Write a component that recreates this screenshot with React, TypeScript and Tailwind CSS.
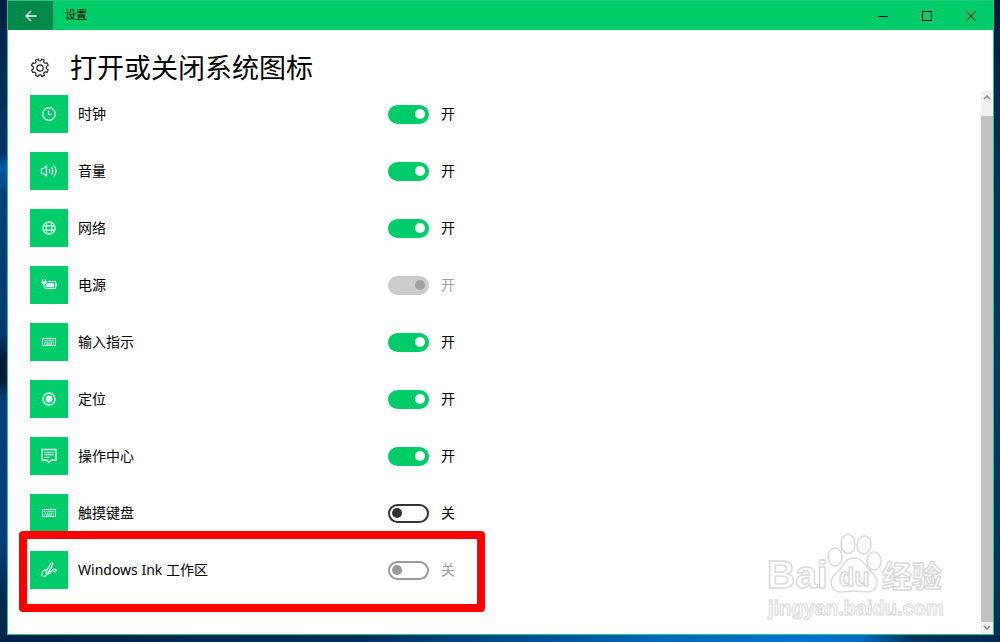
import { useState, type ReactNode } from "react";

type Item = {
  id: string;
  label: string;
  icon: ReactNode;
  on: boolean;
  disabled?: boolean;
  marked?: boolean;
};

const keyboard = (
  <>
    <rect x="2.5" y="5.5" width="13" height="7" />
    <path d="M4 7.5h10M4.8 9.2h9" strokeDasharray="1.3 0.8" />
    <path d="M4 11h1M6 11h6M13 11h1" />
  </>
);

const items: Item[] = [
  {
    id: "clock",
    label: "时钟",
    on: true,
    icon: (
      <>
        <circle cx="9" cy="9" r="6.3" strokeWidth="1.2" />
        <path d="M8.5 5v4.5H12" strokeWidth="1.2" />
      </>
    ),
  },
  {
    id: "volume",
    label: "音量",
    on: true,
    icon: (
      <>
        <path d="M1.5 6.5h2L6.5 3.8v10.4L3.5 11.5h-2z" strokeWidth="1.2" />
        <path d="M9 7q1.6 2 0 4M11.4 5.3q3 3.7 0 7.4M13.8 3.6q4.6 5.4 0 10.8" strokeWidth="1.2" />
      </>
    ),
  },
  {
    id: "network",
    label: "网络",
    on: true,
    icon: (
      <>
        <circle cx="9" cy="9" r="6.2" strokeWidth="1.2" />
        <ellipse cx="9" cy="9" rx="3" ry="6.2" />
        <path d="M3.5 6.8h11M3.5 11.2h11" strokeWidth="1.2" />
      </>
    ),
  },
  {
    id: "power",
    label: "电源",
    on: true,
    disabled: true,
    icon: (
      <>
        <path d="M2.5 3v2M5.5 3v2M4 8v2.5q0 2 2 2h9.500v-7H8M16.500 7.500v3" />
        <path d="M1.500 5h5v1.800L5 8.500H3L1.500 6.800z" fill="currentColor" stroke="none" />
        <path d="M7.500 7H14v4.300H5.500V9.800z" fill="currentColor" stroke="none" />
      </>
    ),
  },
  { id: "input", label: "输入指示", on: true, icon: keyboard },
  {
    id: "location",
    label: "定位",
    on: true,
    icon: (
      <>
        <circle cx="9" cy="9" r="6" strokeWidth="1.4" />
        <circle cx="9" cy="9" r="3.4" fill="currentColor" stroke="none" />
      </>
    ),
  },
  {
    id: "action",
    label: "操作中心",
    on: true,
    icon: (
      <>
        <path d="M2 2.5h14v10.5h-4.5L9 15.5 6.5 13H2z" strokeWidth="1.3" />
        <path d="M4.5 5.5h9M4.5 7.8h9M4.5 10.2h5.5" strokeWidth="1.1" />
      </>
    ),
  },
  { id: "touch", label: "触摸键盘", on: false, icon: keyboard },
  {
    id: "ink",
    label: "Windows Ink 工作区",
    on: false,
    disabled: true,
    marked: true,
    icon: (
      <>
        <path d="M6.5 8.9C3.600 8.800 1.800 10.800 1.800 13c0 2.600 3.400 3.300 5 .8L12.500 4c1-1.800-.8-2.800-2-1L6.800 9.500c-.7 1.300-1 2.300-.7 3.200" strokeWidth="1.200" />
        <path d="M12.800 4 8.900 10.800c-.9 1.700-.3 2.500.6 1.600 1.500-1.500 2.300-3.800 4.600-4.200 1.800-.2 2.500 1.200 1.600 2.200-.8.800-2.100.4-2.300-.8" strokeWidth="1.200" />
      </>
    ),
  },
];

function SettingRow({ item }: { item: Item }) {
  const [on, setOn] = useState(item.on);

  return (
    <li className="relative flex h-[57px] items-start">
      <div className="flex h-[38px] w-full items-center">
        <span className="grid size-[38px] shrink-0 place-items-center bg-[#00cc6a] text-[#e6fff2]">
          <svg viewBox="0 0 18 18" className="size-[18px]" fill="none" stroke="currentColor" aria-hidden="true">
            {item.icon}
          </svg>
        </span>
        <label htmlFor={item.id} className="w-80 pl-[10px] text-sm text-black">
          {item.label}
        </label>
        <input
          id={item.id}
          type="checkbox"
          role="switch"
          checked={on}
          disabled={item.disabled}
          onChange={(e) => setOn(e.target.checked)}
          className="flex h-[19px] w-[41px] shrink-0 appearance-none items-center rounded-full border-2 border-[#333] px-[2px] before:size-[10px] before:rounded-full before:bg-[#333] checked:justify-end checked:border-[#00cc6a] checked:bg-[#00cc6a] checked:before:bg-white disabled:border-[#999] disabled:before:bg-[#999] checked:disabled:border-[#ccc] checked:disabled:bg-[#ccc] checked:disabled:before:bg-[#a0a0a0]"
        />
        <span className={`pl-3 text-sm ${item.disabled ? "text-[#a0a0a0]" : "text-black"}`}>
          {on ? "开" : "关"}
        </span>
      </div>
      {item.marked && (
        <div className="pointer-events-none absolute -top-5 -left-[11px] h-[81px] w-[466px] rounded-[4px] border-8 border-[#fe0000]" />
      )}
    </li>
  );
}

function Watermark() {
  return (
    <svg
      viewBox="0 0 190 95"
      className="pointer-events-none absolute right-10 bottom-2 h-[95px] w-[190px]"
      fill="white"
      stroke="#dadada"
      strokeWidth="1.5"
      strokeLinejoin="round"
      aria-hidden="true"
    >
      <g fontFamily="Liberation Sans, Noto Sans CJK SC, sans-serif" fontWeight="bold">
        <text x="4" y="57" fontSize="39">Bai</text>
        <ellipse cx="72" cy="26" rx="7" ry="9" />
        <ellipse cx="85" cy="13" rx="7" ry="9.5" />
        <ellipse cx="101" cy="14" rx="7" ry="9" transform="rotate(10 101 14)" />
        <ellipse cx="111" cy="30" rx="7" ry="9" />
        <path d="M91 27c-7 0-10 5-13 10-4 5-10 8-10 14 0 6 4 10 10 10 4 0 8-1 13-1s9 1 13 1c6 0 10-4 10-10s-5-9-9-14c-4-5-7-10-14-10z" />
        <text x="76" y="55" fontSize="25">du</text>
        <text x="119" y="56" fontSize="30">经验</text>
        <text x="5" y="84" fontSize="20" stroke="#e2e2e2">jingyan.baidu.com</text>
      </g>
    </svg>
  );
}

export default function App() {
  return (
    <div className="flex min-h-screen bg-[linear-gradient(90deg,#00234a_0%,#002d5c_35%,#004a8c_50%,#0066b8_65%,#0074d0_80%,#006cc4_86%,#003566_91%,#00284f_100%),linear-gradient(180deg,#001c40_0%,#00305e_24%,#003a70_60%,#00305e_100%),linear-gradient(180deg,#001f45_0%,#003468_20%,#003468_24%,#0059a6_26%,#00417c_30%,#003a72_52%,#001a38_56%,#001a38_59%,#003f7c_62%,#003f7c_85%,#002850_93%)] bg-[size:100%_7px,6px_100%,100%_100%] bg-[position:bottom,right,left] bg-no-repeat pr-[6px] pb-[7px] pl-[7px] font-['Noto_Sans','Noto_Sans_CJK_SC',sans-serif]">
      <div className="relative flex flex-1 flex-col border border-[#22c978] bg-white">
        <header className="flex h-[29px] items-center bg-[#00cc6a] text-black">
          <button type="button" aria-label="返回" className="grid h-full w-[45px] place-items-center bg-[#038a4a] text-white">
            <svg viewBox="0 0 12 12" className="size-3" fill="none" stroke="currentColor" strokeWidth="1.3" aria-hidden="true">
              <path d="M11.5 6H1M6 1 1 6l5 5" />
            </svg>
          </button>
          <span className="flex-1 pl-3 text-[11px]">设置</span>
          <button type="button" aria-label="最小化" className="grid h-full w-11 place-items-center">
            <svg viewBox="0 0 10 10" className="size-[10px]" stroke="currentColor" aria-hidden="true">
              <path d="M0 5.5h10" />
            </svg>
          </button>
          <button type="button" aria-label="最大化" className="grid h-full w-11 place-items-center">
            <svg viewBox="0 0 10 10" className="size-[10px]" fill="none" stroke="currentColor" aria-hidden="true">
              <path d="M.5.5h9v9h-9z" />
            </svg>
          </button>
          <button type="button" aria-label="关闭" className="grid h-full w-11 place-items-center">
            <svg viewBox="0 0 10 10" className="size-[10px]" stroke="currentColor" aria-hidden="true">
              <path d="m0 0 10 10M10 0 0 10" />
            </svg>
          </button>
        </header>

        <div className="flex h-[61px] items-center gap-5 pt-[15px] pl-[22px]">
          <svg viewBox="0 0 20 20" className="size-5" fill="none" stroke="#222" strokeWidth="1.2" aria-hidden="true">
            <path
              strokeLinejoin="round"
              d="M8.3 1q.2 2 1.700 2t1.700-2l2.500 1q-1 1.900 0 2.800t2.800 0l1.200 2.400q-2 .8-2 2.500t2 2.200l-1 2.500q-2-.9-3 .1t.2 2.900l-2.600 1.200q-.5-2-1.800-2t-1.900 2l-2.500-1.100q1-1.900 0-2.900t-2.900-.1l-1.100-2.500q2-.5 2-2T1.400 7.400l1.200-2.500q1.900.9 2.900-.1T5.600 2z"
            />
            <circle cx="10" cy="10" r="3.2" />
          </svg>
          <h1 className="text-[27px] leading-9 font-normal text-black">打开或关闭系统图标</h1>
        </div>

        <div className="flex flex-1">
          <ul className="flex-1 pt-1 pl-[22px]">
            {items.map((item) => (
              <SettingRow key={item.id} item={item} />
            ))}
          </ul>
          <div className="flex w-3 flex-col bg-[#f0f0f0] text-[#888]">
            <button type="button" aria-label="向上滚动" className="grid h-3 place-items-center">
              <svg viewBox="0 0 8 6" className="h-[6px] w-2" fill="none" stroke="currentColor" strokeWidth="1.5" aria-hidden="true">
                <path d="m1 5 3-3 3 3" />
              </svg>
            </button>
            <div className="mt-[13px] flex-1 bg-[#c2c2c2]" />
            <button type="button" aria-label="向下滚动" className="grid h-3 place-items-center">
              <svg viewBox="0 0 8 6" className="h-[6px] w-2" fill="none" stroke="currentColor" strokeWidth="1.5" aria-hidden="true">
                <path d="m1 1 3 3 3-3" />
              </svg>
            </button>
          </div>
        </div>
        <Watermark />
      </div>
    </div>
  );
}
